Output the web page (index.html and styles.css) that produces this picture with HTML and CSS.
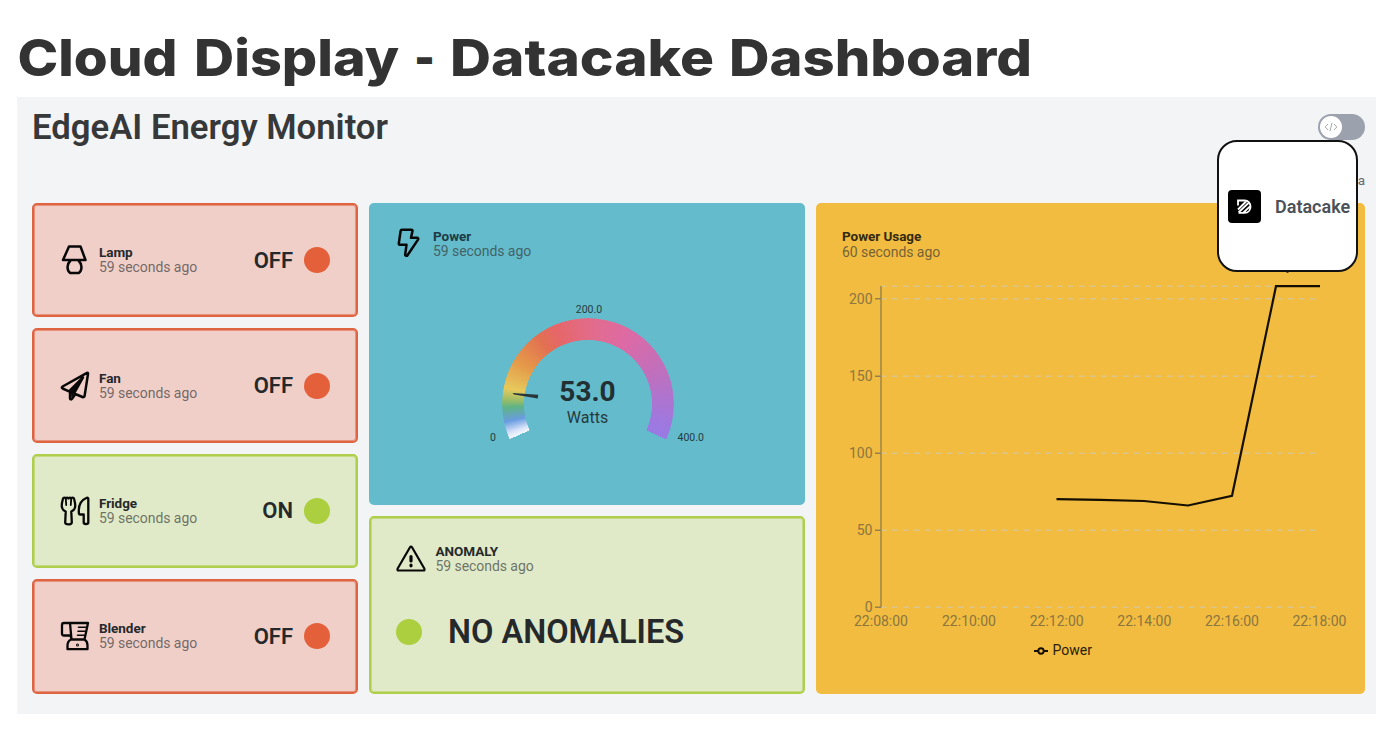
FILE: index.html
```html
<!DOCTYPE html>
<html lang="en">
<head>
<meta charset="utf-8">
<title>Cloud Display - Datacake Dashboard</title>
<link rel="stylesheet" href="styles.css">
</head>
<body>
<h1 class="page-title">
  <svg width="1040" height="97" role="img" aria-label="Cloud Display - Datacake Dashboard">
    <text x="17.500" y="76" textLength="160" lengthAdjust="spacingAndGlyphs">Cloud</text>
    <text x="194" y="76" textLength="205" lengthAdjust="spacingAndGlyphs">Display</text>
    <text x="414" y="76" textLength="21" lengthAdjust="spacingAndGlyphs">-</text>
    <text x="450" y="76" textLength="264" lengthAdjust="spacingAndGlyphs">Datacake</text>
    <text x="729" y="76" textLength="303" lengthAdjust="spacingAndGlyphs">Dashboard</text>
  </svg>
</h1>
<main class="panel">
  <header class="panel-head">
    <h2 class="panel-title">EdgeAI Energy Monitor</h2>
    <div class="head-side">
      <span class="toggle"><span class="knob">
        <svg width="14" height="10" viewBox="0 0 14 10"><path d="M4 2 1.200 5 4 8M10 2l2.800 3L10 8M8 .8 6 9.200"/></svg>
      </span></span>
      <span class="side-label">Data</span>
    </div>
  </header>

  <section class="board">
    <div class="column devices">
      <article class="card off">
        <svg class="icon" viewBox="0 0 30 30"><path d="M9 1.500h11.500l5 13.500H3zM10.500 15.500c-2 2-3 4-3 6.500 0 3 1.200 5 2.700 6h8.600c1.500-1 2.700-3 2.700-6 0-2.500-1-4.500-3-6.500"/></svg>
        <div class="label"><strong>Lamp</strong><span>59 seconds ago</span></div>
        <b class="state">OFF</b><i class="dot"></i>
      </article>
      <article class="card off">
        <svg class="icon" viewBox="0 0 30 30"><path d="M27 1.800 2.600 15.500c-1 .6-1 1.500 0 2l6.400 2.800L23 6.500 14 22.500l8.500 3.500c1 .4 2-.1 2.100-1.100L28 3c.1-1-.3-1.500-1-1.200zM10 21v6.200c0 1.300 1.300 1.700 2 .7l3.300-4.700"/><path d="m10 20.500 11-11-7 12-2 4z" fill="#080808" stroke-width="1"/></svg>
        <div class="label"><strong>Fan</strong><span>59 seconds ago</span></div>
        <b class="state">OFF</b><i class="dot"></i>
      </article>
      <article class="card on">
        <svg class="icon" viewBox="0 0 30 30"><path d="M3 2.500C2.200 5.500 1.600 8.500 1.800 10.500c.2 2.500 1.700 4 3.900 5L5.200 26.500c0 2.500 6.600 2.500 6.600 0L11.300 15.500c2.200-1 3.700-2.500 3.900-5 .2-2-.4-5-1.200-8-.4-1.200-2.500-1.200-2.700.1-.4-1.200-2.400-1.200-2.800-.1-.4-1.100-2.400-1.100-2.800.1-.2-1.300-2.300-1.300-2.700-.1z" stroke-width="2.300"/><path d="M5.800 2.600 6.200 9M11.200 2.600 10.800 9" stroke-width="1.800"/><path d="M28.300 3v23.500c0 2-4.600 2-4.600 0V18.500h-3.500c-1 0-1.500-.6-1.300-1.700-.6-7 1.600-12.300 7.400-14.800 1-.5 2-.2 2 1z" stroke-width="2.300"/></svg>
        <div class="label"><strong>Fridge</strong><span>59 seconds ago</span></div>
        <b class="state">ON</b><i class="dot"></i>
      </article>
      <article class="card off">
        <svg class="icon" viewBox="0 0 30 30"><path d="M10.500 14.500H4c-1.200 0-2-.8-2-2V4c0-1.200.8-2 2-2H28l-3.500 16.500H11.500zM10 2l1.500 16.500M11 18.500c-2.500 1.200-3.500 3-3.500 6V28.200h20V24.500c0-3-1-4.800-3-6" stroke-width="2.300"/><path d="M18.500 6.200H26M18 10.300h7M17.500 14.300H24.500" stroke-width="1.600"/><circle cx="17.500" cy="24" r=".5" stroke-width="2"/></svg>
        <div class="label"><strong>Blender</strong><span>59 seconds ago</span></div>
        <b class="state">OFF</b><i class="dot"></i>
      </article>
    </div>

    <div class="column center">
      <article class="card power">
        <div class="card-head">
          <svg class="icon" viewBox="0 0 30 30"><path d="M8 1.800h9.500c.8 0 1.200.6 1 1.300L17 9.800h6c1 0 1.500 1 1 1.800L13.500 27.200c-.8 1.200-2.500.5-2.300-.8l1.300-9.600H6c-.8 0-1.300-.6-1.200-1.400L6.600 3c.1-.7.6-1.200 1.400-1.200z"/></svg>
          <div class="label"><strong>Power</strong><span>59 seconds ago</span></div>
        </div>
        <div class="gauge">
          <div class="gauge-ring"></div>
          <svg class="gauge-marks" width="240" height="150" viewBox="468 298 240 150">
            <path class="needle" d="M512.500 393 538.200 394.700 537.800 398.500 514 394.500z"/>
            <text class="tick" x="589" y="312.700" text-anchor="middle">200.0</text>
            <text class="tick" x="490" y="441">0</text>
            <text class="tick" x="677.500" y="441">400.0</text>
            <text class="reading" x="587.500" y="400.700" text-anchor="middle">53.0</text>
            <text class="unit" x="587.500" y="423" text-anchor="middle">Watts</text>
          </svg>
        </div>
      </article>
      <article class="card on anomaly">
        <div class="card-head">
          <svg class="icon" viewBox="0 0 30 30"><path d="M14 3.300 1.700 24.500c-.6 1.100-.2 2 1 2h24.600c1.200 0 1.600-.9 1-2L16 3.300c-.6-1-1.400-1-2 0z" stroke-width="2.200"/><path d="M15 12.500v4.500M15 21.200v.6" stroke-width="3.200"/></svg>
          <div class="label"><strong>ANOMALY</strong><span>59 seconds ago</span></div>
        </div>
        <div class="verdict"><i class="dot"></i><b>NO ANOMALIES</b></div>
      </article>
    </div>

    <article class="card usage">
      <div class="label"><strong>Power Usage</strong><span>60 seconds ago</span></div>
      <svg class="chart" width="549" height="400" viewBox="816 270 549 400">
        <path class="grid" d="M881 286.200h439M881 298.800h439M881 376.200h439M881 453.300h439M881 530.300h439M881 607.200h439"/>
        <path class="axis" d="M881 286V607.200M875 298.800h6M875 376.200h6M875 453.300h6M875 530.300h6M875 607.200h6"/>
        <g class="axis-text" text-anchor="end">
          <text x="872.500" y="303.800">200</text><text x="872.500" y="381.200">150</text><text x="872.500" y="458.300">100</text><text x="872.500" y="535.300">50</text><text x="872.500" y="612.200">0</text>
        </g>
        <g class="axis-text" text-anchor="middle">
          <text x="881" y="626.300">22:08:00</text><text x="969" y="626.300">22:10:00</text><text x="1056.700" y="626.300">22:12:00</text><text x="1144.300" y="626.300">22:14:00</text><text x="1232" y="626.300">22:16:00</text><text x="1319.500" y="626.300">22:18:00</text>
        </g>
        <polyline class="series" points="1056.500,499.200 1100,499.800 1144,501 1188,505.500 1232,495.800 1276,286.200 1320,286.200"/>
        <circle cx="1287.500" cy="271.500" r="1.300"/>
        <path class="key" d="M1034 651h4M1044 651h4"/><circle class="key" cx="1041" cy="651" r="2.700"/>
        <text class="key-text" x="1052.500" y="655">Power</text>
      </svg>
    </article>
  </section>

  <aside class="brand">
    <svg width="33" height="33" viewBox="0 0 33 33"><rect width="33" height="33" rx="4"/><path d="M10 15.500V10.500h6.500c8 0 8 12.300 0 12.300H10.500M10 19.500l8.500-8.500M10.500 22.500 21 12.500M15.500 22.500l6.500-6.200"/></svg>
    <b>Datacake</b>
  </aside>
</main>
</body>
</html>
```

FILE: styles.css
```css
* { box-sizing: border-box; }
body {
  margin: 0;
  width: 1393px;
  height: 738px;
  overflow: hidden;
  background: #fff;
  font-family: Roboto, "Liberation Sans", sans-serif;
  color: #26292b;
}
.page-title {
  margin: 0;
  height: 97px;
  font: 800 51px Inter, sans-serif;
  fill: #333;
}
.page-title svg { display: block; }
.panel {
  position: relative;
  margin: 0 17px;
  height: 617px;
  padding: 0 11px 0 15px;
  background: #f3f4f6;
}
.panel-head {
  height: 106px;
  display: flex;
  justify-content: space-between;
}
.panel-title {
  margin: 10px 0 0;
  font-size: 34.700px;
  line-height: 40px;
  font-weight: 600;
  color: #36383a;
}
.head-side {
  display: flex;
  flex-direction: column;
  align-items: flex-end;
  padding-top: 17px;
}
.toggle {
  width: 47px;
  height: 26px;
  padding: 2px;
  border-radius: 13px;
  background: #9ba1ad;
}
.knob {
  display: flex;
  align-items: center;
  justify-content: center;
  width: 22px;
  height: 22px;
  border-radius: 50%;
  background: #fff;
}
.knob path { fill: none; stroke: #a5a8ac; stroke-width: 1; }
.side-label { margin-top: 32px; font-size: 13.500px; line-height: 16px; color: #666a6e; }
.board {
  display: grid;
  grid-template-columns: 326px 436px 549px;
  gap: 11px;
  height: 490.500px;
}
.column { display: grid; gap: 11px; }
.devices { grid-template-rows: repeat(4, 1fr); }
.center { grid-template-rows: 302px 1fr; }
.card { border-radius: 5px; }
.card.off { --accent: #e4603a; background: #f0cfc9; border: 2px solid #df6442; box-shadow: inset 0 0 0 1px #e7937c; }
.card.on { --accent: #abcf3f; background: #e0eac8; border: 2px solid #afcf4c; box-shadow: inset 0 0 0 1px #c5db83; }
.devices .card { display: flex; align-items: center; padding: 0 26px 0 25.500px; }
.icon {
  width: 30px;
  height: 30px;
  flex: none;
  fill: none;
  stroke: #080808;
  stroke-width: 2.500;
  stroke-linecap: round;
  stroke-linejoin: round;
}
.label { display: flex; flex-direction: column; white-space: nowrap; }
.label strong { font-size: 13.500px; line-height: 15px; font-weight: 700; letter-spacing: -.05px; }
.label span { font-size: 14px; line-height: 15px; letter-spacing: -.06px; color: rgba(50, 50, 50, .67); }
.devices .label { flex: 1; margin-left: 9.500px; }
.state { font-size: 22px; font-weight: 600; margin-right: 11px; }
.dot { flex: none; width: 26px; height: 26px; border-radius: 50%; background: var(--accent); }
.card-head { display: flex; align-items: center; }
.power { padding: 25px; background: #64bbcb; }
.power .icon { margin-top: -2px; }
.power .label { margin-left: 9px; padding-top: 1px; }
.power strong { color: #1c3b45; }
.gauge { position: relative; margin: 39px 0 0 74px; width: 240px; height: 150px; }
.gauge-ring {
  position: absolute;
  left: 33.700px;
  top: 19.700px;
  width: 172px;
  height: 172px;
  border-radius: 50%;
  background: conic-gradient(from 245.800deg, #f4f8ff 0deg, #d9e4f8 4deg, #699ce0 12deg, #5fb486 22deg, #9bbd67 27deg, #e6c95d 35deg, #e59949 55deg, #e27052 78deg, #e66768 90deg, #e16c91 122deg, #dd6aa5 145deg, #bf70bd 180deg, #9f78df 218deg, #997ae3 228.400deg, transparent 228.600deg);
  -webkit-mask: radial-gradient(circle, transparent 63.700px, #000 64.300px);
  mask: radial-gradient(circle, transparent 63.700px, #000 64.300px);
}
.gauge-marks { position: absolute; left: 0; top: 0; }
.needle { fill: #28363a; }
.tick { font-size: 10.500px; fill: #253c42; }
.reading { font-size: 28px; font-weight: 700; fill: #222f33; }
.unit { font-size: 16px; fill: #263a40; }
.anomaly { padding: 26px 24.500px; }
.anomaly .label { margin-left: 10px; }
.verdict { display: flex; align-items: center; margin-top: 38px; gap: 26.500px; }
.verdict b { font-size: 32.500px; line-height: 40px; font-weight: 600; }
.usage { background: #f2bc40; }
.usage .label { padding: 26px 0 0 26px; }
.usage .label span { padding-top: 1px; }
.usage strong { color: #342a10; }
.chart { display: block; margin-top: 10px; }
.grid { fill: none; stroke: #dac68c; stroke-width: 1.500; stroke-dasharray: 5.500 5.500; }
.axis { fill: none; stroke: #988149; stroke-width: 1.400; }
.axis-text { font-size: 14px; fill: #8b763f; }
.series { fill: none; stroke: #140f00; stroke-width: 2.200; }
.key { fill: none; stroke: #140f00; stroke-width: 1.900; }
.key-text { font-size: 14px; fill: #2a210a; }
.brand {
  position: absolute;
  left: 1200px;
  top: 43px;
  width: 141px;
  height: 132px;
  display: flex;
  align-items: center;
  gap: 14px;
  padding-left: 9px;
  border: 2px solid #111;
  border-radius: 20px;
  background: #fff;
}
.brand b { font-size: 18px; font-weight: 600; color: #4b5158; }
.brand path { fill: none; stroke: #fff; stroke-width: 1.800; }
```
